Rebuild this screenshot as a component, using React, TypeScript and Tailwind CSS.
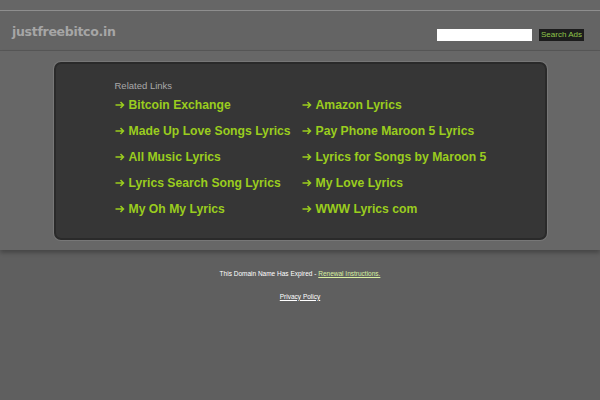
const left = [
  "Bitcoin Exchange",
  "Made Up Love Songs Lyrics",
  "All Music Lyrics",
  "Lyrics Search Song Lyrics",
  "My Oh My Lyrics",
];

const right = [
  "Amazon Lyrics",
  "Pay Phone Maroon 5 Lyrics",
  "Lyrics for Songs by Maroon 5",
  "My Love Lyrics",
  "WWW Lyrics com",
];

function Arrow() {
  return (
    <svg width="10" height="8" viewBox="0 0 10 8" className="mr-[4px]">
      <path d="M0.5 4H8.5M5.5 1L8.5 4L5.5 7" fill="none" stroke="currentColor" strokeWidth="1.5" />
    </svg>
  );
}

function LinkItem({ label }: { label: string }) {
  return (
    <a href="#" className="flex h-[26px] items-center text-[12.2px] font-bold text-[#9acd1e]">
      <Arrow />
      {label}
    </a>
  );
}

export default function App() {
  return (
    <div className="min-h-[400px] w-[600px] bg-[#5f5f5f] font-['Liberation_Sans',Arial,sans-serif]">
      <div className="h-[10px] bg-[#666666]" />
      <div className="flex h-[41px] items-end justify-between border-t border-b border-t-[#8e8e8e] border-b-[#575757] bg-[#646464] pb-[9px] pl-3 pr-4">
        <span className="mb-[1px] font-['DejaVu_Sans',sans-serif] text-[12.5px] font-bold leading-[16px] tracking-[-0.3px] text-[#a6a6a6]">
          justfreebitco.in
        </span>
        <div className="flex items-center gap-[7px]">
          <input className="h-[12px] w-[95px] bg-white" />
          <button className="h-[12px] w-[45px] bg-[#1c1c1c] text-[8px] leading-[12px] text-[#8fc54a]">
            Search Ads
          </button>
        </div>
      </div>
      <div className="bg-[#676767] pt-[11px] pb-[10px] shadow-[0_3px_4px_rgba(0,0,0,0.25)]">
        <div className="mx-auto h-[178px] w-[493px] rounded-[7px] border-2 border-[#2a2a2a] bg-[#363636] pl-[59px] pt-[15px] shadow-[0_0_0_1px_#777]">
          <div className="text-[9.5px] text-[#a9a9a9]">Related Links</div>
          <div className="-mt-[1px] flex">
            <div className="w-[187px]">
              {left.map((l) => (
                <LinkItem key={l} label={l} />
              ))}
            </div>
            <div>
              {right.map((l) => (
                <LinkItem key={l} label={l} />
              ))}
            </div>
          </div>
        </div>
      </div>
      <div className="pt-[19px] text-center text-[6.5px] text-white">
        This Domain Name Has Expired -{" "}
        <a href="#" className="text-[#d9f0a0] underline">
          Renewal Instructions.
        </a>
      </div>
      <div className="pt-[13px] text-center text-[6.5px] text-white">
        <a href="#" className="underline">
          Privacy Policy
        </a>
      </div>
    </div>
  );
}
